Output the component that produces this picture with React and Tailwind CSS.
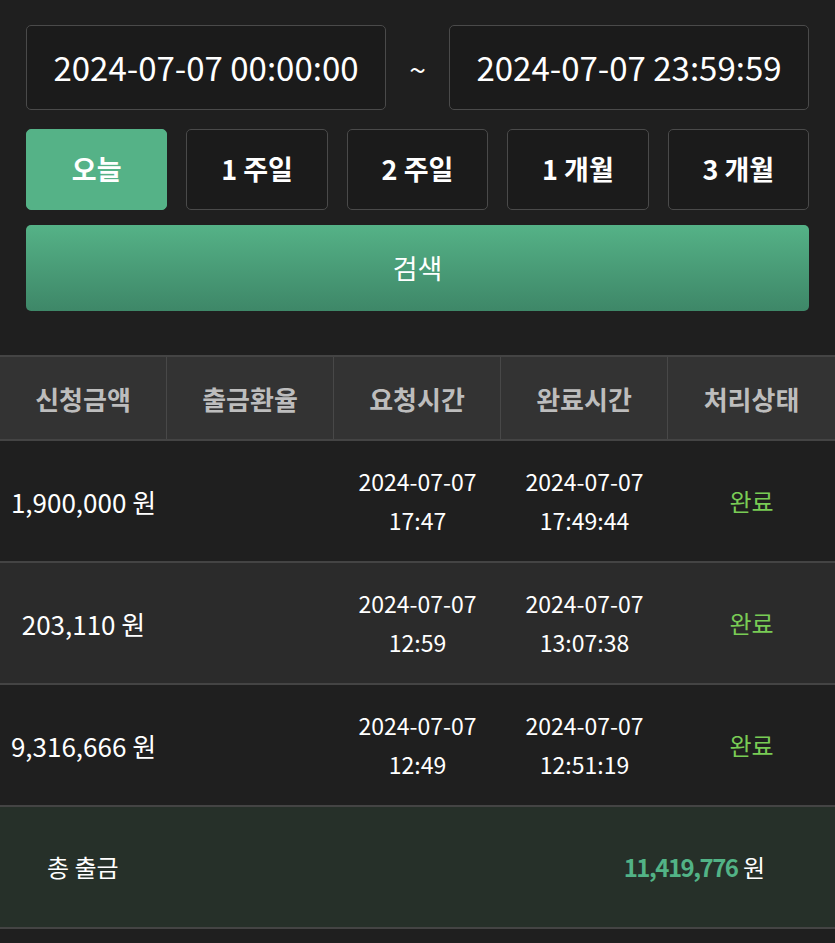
import React from 'react';

const periods = ['오늘', '1 주일', '2 주일', '1 개월', '3 개월'];

const rows = [
  { amount: '1,900,000 원', reqDate: '2024-07-07', reqTime: '17:47', doneDate: '2024-07-07', doneTime: '17:49:44' },
  { amount: '203,110 원', reqDate: '2024-07-07', reqTime: '12:59', doneDate: '2024-07-07', doneTime: '13:07:38' },
  { amount: '9,316,666 원', reqDate: '2024-07-07', reqTime: '12:49', doneDate: '2024-07-07', doneTime: '12:51:19' },
];

const headers = ['신청금액', '출금환율', '요청시간', '완료시간', '처리상태'];

const App = () => {
  return (
    <div
      className="min-h-[943px] bg-[#1f1f1f] text-white"
      style={{ fontFamily: '"Noto Sans CJK KR", "Noto Sans", sans-serif' }}
    >
      {/* search form */}
      <div className="px-[26px] pt-[25px]">
        <div className="flex items-center">
          <div className="flex-1 h-[85px] rounded-[5px] border border-[#4a4a4a] bg-[#1b1b1b] flex items-center justify-center text-[33px]">
            2024-07-07 00:00:00
          </div>
          <div className="w-[63px] text-center text-[30px] leading-none">~</div>
          <div className="flex-1 h-[85px] rounded-[5px] border border-[#4a4a4a] bg-[#1b1b1b] flex items-center justify-center text-[33px]">
            2024-07-07 23:59:59
          </div>
        </div>

        <div className="grid grid-cols-5 gap-[19px] mt-[19px]">
          {periods.map((p, i) => (
            <button
              key={p}
              className={
                i === 0
                  ? 'h-[81px] rounded-[5px] bg-[#55b287] border border-[#55b287] text-[27px] font-bold'
                  : 'h-[81px] rounded-[5px] bg-[#1b1b1b] border border-[#4a4a4a] text-[27px] font-bold'
              }
            >
              {p}
            </button>
          ))}
        </div>

        <button className="mt-[15px] w-full h-[86px] rounded-[5px] bg-gradient-to-b from-[#55b287] to-[#3e8768] text-[27px]">
          검색
        </button>
      </div>

      {/* result table */}
      <div className="mt-[44px] border-t-2 border-[#444]">
        <div className="grid grid-cols-5 bg-[#333] h-[84px] border-b-2 border-[#444]">
          {headers.map((h, i) => (
            <div
              key={h}
              className={
                i < 4
                  ? 'flex items-center justify-center text-[26px] font-bold text-[#bdbdbd] border-r border-[#484848]'
                  : 'flex items-center justify-center text-[26px] font-bold text-[#bdbdbd]'
              }
            >
              {h}
            </div>
          ))}
        </div>

        {rows.map((r, i) => (
          <div
            key={r.amount}
            className={
              i % 2 === 1
                ? 'grid grid-cols-5 h-[122px] bg-[#2b2b2b] border-b-2 border-[#444]'
                : 'grid grid-cols-5 h-[122px] bg-[#1f1f1f] border-b-2 border-[#444]'
            }
          >
            <div className="flex items-center justify-center text-[26px] whitespace-nowrap">{r.amount}</div>
            <div />
            <div className="flex flex-col items-center justify-center text-[23px] leading-[39px]">
              <span>{r.reqDate}</span>
              <span>{r.reqTime}</span>
            </div>
            <div className="flex flex-col items-center justify-center text-[23px] leading-[39px]">
              <span>{r.doneDate}</span>
              <span>{r.doneTime}</span>
            </div>
            <div className="flex items-center justify-center text-[24px] text-[#79cc55]">완료</div>
          </div>
        ))}

        <div className="h-[122px] bg-[#263029] border-b-2 border-[#444] flex items-center justify-between pl-[47px] pr-[70px]">
          <span className="text-[24px]">총 출금</span>
          <span className="text-[24px]">
            <span className="font-bold text-[#52b386] tracking-[-1.5px]">11,419,776</span> 원
          </span>
        </div>
      </div>
    </div>
  );
};

export default App;
